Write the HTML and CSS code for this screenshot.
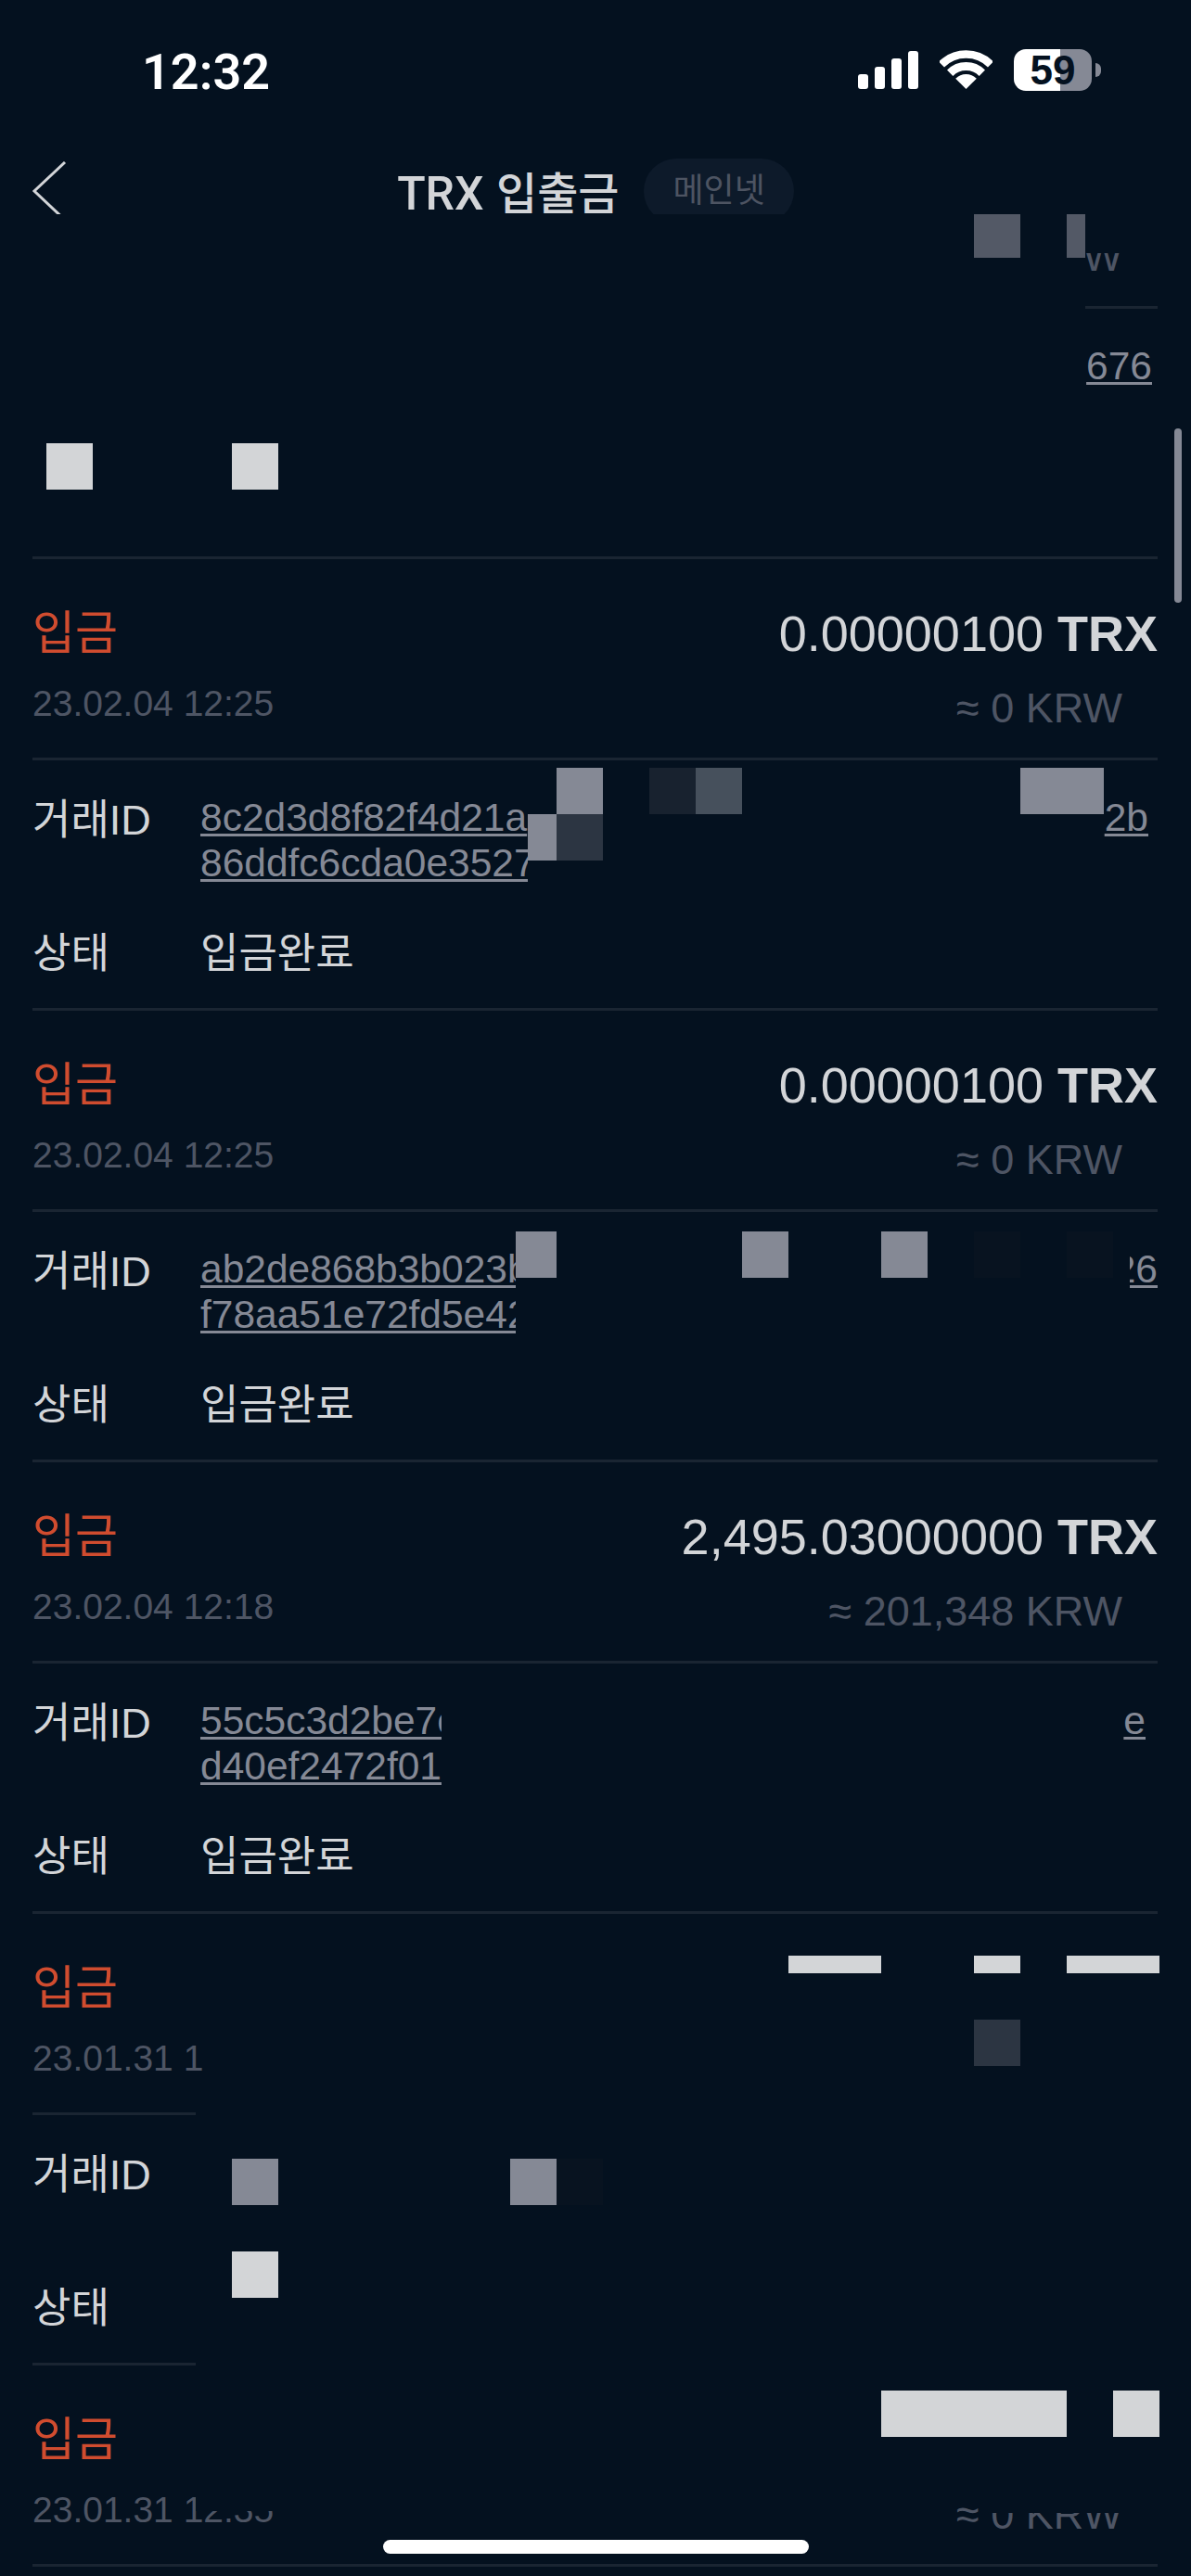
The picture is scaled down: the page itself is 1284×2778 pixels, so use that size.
FILE: index.html
```html
<!DOCTYPE html>
<html lang="ko">
  <head>
    <meta charset="UTF-8" />
    <meta name="viewport" content="width=device-width, initial-scale=1.0" />
    <title>TRX 입출금</title>
    <link rel="stylesheet" href="styles.css">
  </head>
  <body>
    <div class="page">
      <header class="status-bar">
        <span class="clock">12:32</span>
        <div class="status-icons">
          <div class="signal"><i></i><i></i><i></i><i></i></div>
          <svg class="wifi" viewBox="0 0 57 42" width="57" height="42">
            <path d="M2 15.5A37.5 37.5 0 0 1 55 15.5" fill="none" stroke="#fff" stroke-width="8.5" />
            <path d="M11.2 24.7A24.5 24.5 0 0 1 45.8 24.7" fill="none" stroke="#fff" stroke-width="9" />
            <path d="M28.5 42L17.2 30.7A16 16 0 0 1 39.8 30.7Z" fill="#fff" />
          </svg>
          <div class="battery"><span>59</span></div>
          <div class="battery-nub"></div>
        </div>
      </header>

      <nav class="nav">
        <svg class="back" viewBox="0 0 44 70" width="44" height="70">
          <path d="M36 1L3 32L40 67" fill="none" stroke="#d3d5d8" stroke-width="3" />
        </svg>
        <div class="nav-title">
          <h1><span class="coin">TRX</span> 입출금</h1>
          <span class="pill">메인넷</span>
        </div>
      </nav>

      <main class="viewport">
        <div class="list">
          <section class="item">
            <div class="head">
              <div class="head-top"></div>
              <div class="head-bottom">
                <span></span>
                <span class="krw">W</span>
              </div>
            </div>
            <div class="rule rule-end"></div>
            <div class="detail">
              <div class="detail-row">
                <span class="label"></span>
                <div class="hash">
                  <div class="hash-line"><a class="hash-tail tail-first" href="#">676</a></div>
                </div>
              </div>
            </div>
          </section>

          <section class="item">
            <div class="head">
              <div class="head-top">
                <span class="type">입금</span>
                <span class="amount">0.00000100 <b>TRX</b></span>
              </div>
              <div class="head-bottom">
                <span class="date">23.02.04 12:25</span>
                <span class="krw">≈ 0 KRW</span>
              </div>
            </div>
            <div class="rule"></div>
            <div class="detail">
              <div class="detail-row">
                <span class="label">거래ID</span>
                <div class="hash">
                  <div class="hash-line">
                    <a class="hash-part part-long" href="#">8c2d3d8f82f4d21a</a>
                    <a class="hash-tail tail-2b" href="#">2b</a>
                  </div>
                  <div class="hash-line">
                    <a class="hash-part part-long" href="#">86ddfc6cda0e3527</a>
                  </div>
                </div>
              </div>
              <div class="detail-row status-row">
                <span class="label">상태</span>
                <span class="status">입금완료</span>
              </div>
            </div>
          </section>

          <section class="item">
            <div class="head">
              <div class="head-top">
                <span class="type">입금</span>
                <span class="amount">0.00000100 <b>TRX</b></span>
              </div>
              <div class="head-bottom">
                <span class="date">23.02.04 12:25</span>
                <span class="krw">≈ 0 KRW</span>
              </div>
            </div>
            <div class="rule"></div>
            <div class="detail">
              <div class="detail-row">
                <span class="label">거래ID</span>
                <div class="hash">
                  <div class="hash-line">
                    <a class="hash-part part-mid" href="#">ab2de868b3b023b</a>
                    <a class="hash-tail tail-26" href="#"><span>26</span></a>
                  </div>
                  <div class="hash-line">
                    <a class="hash-part part-mid" href="#">f78aa51e72fd5e42</a>
                  </div>
                </div>
              </div>
              <div class="detail-row status-row">
                <span class="label">상태</span>
                <span class="status">입금완료</span>
              </div>
            </div>
          </section>

          <section class="item">
            <div class="head">
              <div class="head-top">
                <span class="type">입금</span>
                <span class="amount">2,495.03000000 <b>TRX</b></span>
              </div>
              <div class="head-bottom">
                <span class="date">23.02.04 12:18</span>
                <span class="krw">≈ 201,348 KRW</span>
              </div>
            </div>
            <div class="rule"></div>
            <div class="detail">
              <div class="detail-row">
                <span class="label">거래ID</span>
                <div class="hash">
                  <div class="hash-line">
                    <a class="hash-part part-short" href="#">55c5c3d2be7c</a>
                    <a class="hash-tail tail-e" href="#">e</a>
                  </div>
                  <div class="hash-line">
                    <a class="hash-part part-short" href="#">d40ef2472f01</a>
                  </div>
                </div>
              </div>
              <div class="detail-row status-row">
                <span class="label">상태</span>
                <span class="status">입금완료</span>
              </div>
            </div>
          </section>

          <section class="item item-cut">
            <div class="head">
              <div class="head-top">
                <span class="type">입금</span>
              </div>
              <div class="head-bottom">
                <span class="date">23.01.31 1</span>
              </div>
            </div>
            <div class="rule rule-start"></div>
            <div class="detail">
              <div class="detail-row">
                <span class="label">거래ID</span>
              </div>
              <div class="detail-row status-row">
                <span class="label">상태</span>
              </div>
            </div>
          </section>

          <section class="item item-last">
            <div class="head">
              <div class="head-top">
                <span class="type">입금</span>
              </div>
              <div class="head-bottom">
                <span class="date">23.01.31 12:35</span>
                <span class="krw">≈ 0 KRW</span>
              </div>
            </div>
            <div class="rule"></div>
          </section>
        </div>
      </main>

      <!-- mosaic patches that lie over the list -->
      <div class="patch mid p1"></div>
      <div class="patch mid p2"></div>
      <div class="patch bg p3"></div>
      <div class="patch light p4"></div>
      <div class="patch light p5"></div>

      <div class="patch grey p6"></div>
      <div class="patch grey p7"></div>
      <div class="patch slate p8"></div>
      <div class="patch dark p9"></div>
      <div class="patch steel p10"></div>
      <div class="patch grey p11"></div>

      <div class="patch grey p12"></div>
      <div class="patch grey p13"></div>
      <div class="patch grey p14"></div>
      <div class="patch faint p15"></div>
      <div class="patch faint p16"></div>

      <div class="patch light p17"></div>
      <div class="patch light p18"></div>
      <div class="patch light p19"></div>
      <div class="patch slate p20"></div>
      <div class="patch grey p21"></div>
      <div class="patch grey p22"></div>
      <div class="patch faint p23"></div>
      <div class="patch light p24"></div>

      <div class="patch light p25"></div>
      <div class="patch light p26"></div>
      <div class="patch bg p27"></div>
      <div class="patch bg p28"></div>

      <div class="scrollbar"></div>
      <div class="home-bar"></div>
    </div>
  </body>
</html>
```

FILE: styles.css
```css
/* Global styles */
* {
  box-sizing: border-box;
  margin: 0;
  padding: 0;
  font-family: "Liberation Sans", "Noto Sans CJK KR", sans-serif;
}

body {
  background-color: #04111f;
}

.page {
  position: relative;
  width: 1284px;
  height: 2778px;
  overflow: hidden;
  background-color: #04111f;
  color: #d3d5d8;
}

/* Status bar */
.status-bar {
  display: flex;
  justify-content: space-between;
  height: 150px;
  padding: 49px 97px 0 153px;
  color: #fff;
}

.clock {
  font-family: Roboto, sans-serif;
  font-size: 54px;
  line-height: 58px;
  font-weight: 600;
}

.status-icons {
  display: flex;
  align-items: flex-start;
  padding-top: 4px;
}

.signal {
  display: flex;
  align-items: flex-end;
  gap: 7px;
  height: 41px;
  margin-top: 2px;
  margin-right: 23px;
}

.signal i {
  display: block;
  width: 11px;
  background: #fff;
  border-radius: 3px;
}

.signal i:nth-child(1) { height: 16px; }
.signal i:nth-child(2) { height: 24px; }
.signal i:nth-child(3) { height: 33px; }
.signal i:nth-child(4) { height: 41px; }

.wifi {
  margin-top: 1px;
  margin-right: 23px;
}

.battery {
  display: flex;
  justify-content: center;
  align-items: center;
  width: 84px;
  height: 45px;
  border-radius: 13px;
  background: linear-gradient(90deg, #fff 0, #fff 50px, #858995 50px);
}

.battery span {
  font-size: 44px;
  font-weight: 700;
  line-height: 45px;
  color: #04111f;
}

.battery-nub {
  width: 6px;
  height: 15px;
  margin-top: 15px;
  margin-left: 4px;
  border-radius: 0 8px 8px 0;
  background: #858995;
}

/* Nav */
.nav {
  display: grid;
  grid-template-columns: 1fr auto 1fr;
  height: 81px;
  overflow: hidden;
}

.back {
  grid-column: 1;
  grid-row: 1;
  margin-top: 24px;
  margin-left: 34px;
}

.nav-title {
  grid-column: 2;
  grid-row: 1;
  display: flex;
  align-items: flex-start;
  gap: 27px;
  padding-top: 21px;
}

.nav-title h1 {
  padding-top: 3px;
  font-size: 48px;
  line-height: 70px;
  font-weight: 500;
  white-space: nowrap;
}

.coin {
  font-family: Roboto, sans-serif;
  font-size: 50px;
  font-weight: 500;
}

.pill {
  height: 70px;
  padding: 0 31px;
  border-radius: 35px;
  background-color: #0d1a2a;
  color: #4d5462;
  font-size: 36px;
  line-height: 70px;
  white-space: nowrap;
}

/* List */
.viewport {
  height: 2547px;
  overflow: hidden;
}

.list {
  margin-top: -115px;
  padding: 0 36px 0 35px;
}

.item {
  height: 487px;
  border-bottom: 3px solid #1a2532;
}

.item-cut {
  border-bottom: none;
}

.item-cut::after {
  content: "";
  display: block;
  width: 176px;
  height: 3px;
  background-color: #1a2532;
}

.item-cut .detail {
  height: 267px;
}

.item-last {
  border-bottom: none;
}

.head {
  height: 214px;
  padding-top: 44px;
}

.head-top,
.head-bottom {
  display: flex;
  justify-content: space-between;
  align-items: flex-start;
}

.head-top {
  height: 72px;
}

.head-bottom {
  height: 57px;
  margin-top: 15px;
}

.type {
  color: #d04c2f;
  font-size: 50px;
  line-height: 72px;
}

.amount {
  font-size: 54px;
  line-height: 72px;
}

.amount b {
  font-weight: 700;
}

.date {
  color: #4e5564;
  font-size: 39px;
  line-height: 50px;
}

.krw {
  margin-top: 5px;
  margin-right: 38px;
  color: #4e5564;
  font-size: 45px;
  line-height: 50px;
}

.rule {
  height: 3px;
  background-color: #1a2532;
}

.rule-end {
  margin-left: 1135px;
}

.rule-start {
  width: 176px;
}

.detail {
  padding-top: 37px;
}

.detail-row {
  display: flex;
  height: 98px;
}

.status-row {
  height: 49px;
  margin-top: 46px;
}

.label {
  flex: none;
  width: 181px;
  padding-top: 3px;
  font-size: 45px;
  line-height: 49px;
}

.status {
  padding-top: 3px;
  font-size: 45px;
  line-height: 49px;
}

.hash {
  flex: 1;
}

.hash-line {
  display: flex;
  height: 49px;
}

.hash-part,
.hash-tail {
  color: #858995;
  font-size: 42.5px;
  line-height: 49px;
  white-space: nowrap;
  text-decoration: underline 3px;
  text-underline-offset: 3px;
}

.hash-part {
  display: block;
  overflow: hidden;
}

.part-long { width: 353px; }
.part-mid { width: 340px; }
.part-short { width: 260px; }

.hash-tail {
  margin-left: auto;
}

.tail-first { margin-right: 6px; }
.tail-2b { margin-right: 10px; }
.tail-e { margin-right: 13px; }

.tail-26 {
  display: flex;
  justify-content: flex-end;
  width: 30px;
  overflow: hidden;
  text-decoration: none;
}

.tail-26 span {
  flex: none;
  text-decoration: underline 3px;
  text-underline-offset: 3px;
}

/* Mosaic patches */
.patch {
  position: absolute;
}

.patch.light { background-color: #d3d5d7; }
.patch.grey { background-color: #858995; }
.patch.mid { background-color: #535966; }
.patch.steel { background-color: #46505c; }
.patch.slate { background-color: #2c3542; }
.patch.dark { background-color: #18222f; }
.patch.faint { background-color: #081320; }
.patch.bg { background-color: #04111f; }

.p1 { left: 1050px; top: 231px; width: 50px; height: 47px; }
.p2 { left: 1150px; top: 231px; width: 20px; height: 47px; }
.p3 { left: 1170px; top: 231px; width: 80px; height: 42px; }
.p4 { left: 50px; top: 478px; width: 50px; height: 50px; }
.p5 { left: 250px; top: 478px; width: 50px; height: 50px; }

.p6 { left: 600px; top: 828px; width: 50px; height: 50px; }
.p7 { left: 569px; top: 878px; width: 31px; height: 50px; }
.p8 { left: 600px; top: 878px; width: 50px; height: 50px; }
.p9 { left: 700px; top: 828px; width: 50px; height: 50px; }
.p10 { left: 750px; top: 828px; width: 50px; height: 50px; }
.p11 { left: 1100px; top: 828px; width: 90px; height: 50px; }

.p12 { left: 556px; top: 1328px; width: 44px; height: 50px; }
.p13 { left: 800px; top: 1328px; width: 50px; height: 50px; }
.p14 { left: 950px; top: 1328px; width: 50px; height: 50px; }
.p15 { left: 1050px; top: 1328px; width: 50px; height: 50px; }
.p16 { left: 1150px; top: 1328px; width: 50px; height: 50px; }

.p17 { left: 850px; top: 2109px; width: 100px; height: 19px; }
.p18 { left: 1050px; top: 2109px; width: 50px; height: 19px; }
.p19 { left: 1150px; top: 2109px; width: 100px; height: 19px; }
.p20 { left: 1050px; top: 2178px; width: 50px; height: 50px; }
.p21 { left: 250px; top: 2328px; width: 50px; height: 50px; }
.p22 { left: 550px; top: 2328px; width: 50px; height: 50px; }
.p23 { left: 600px; top: 2328px; width: 50px; height: 50px; }
.p24 { left: 250px; top: 2428px; width: 50px; height: 50px; }

.p25 { left: 950px; top: 2578px; width: 200px; height: 50px; }
.p26 { left: 1200px; top: 2578px; width: 50px; height: 50px; }
.p27 { left: 211px; top: 2670px; width: 90px; height: 38px; }
.p28 { left: 1062px; top: 2670px; width: 158px; height: 40px; }

.scrollbar {
  position: absolute;
  left: 1266px;
  top: 462px;
  width: 8px;
  height: 188px;
  border-radius: 4px;
  background-color: #858995;
}

.home-bar {
  position: absolute;
  left: 413px;
  top: 2739px;
  width: 459px;
  height: 15px;
  border-radius: 8px;
  background-color: #fff;
}
```
